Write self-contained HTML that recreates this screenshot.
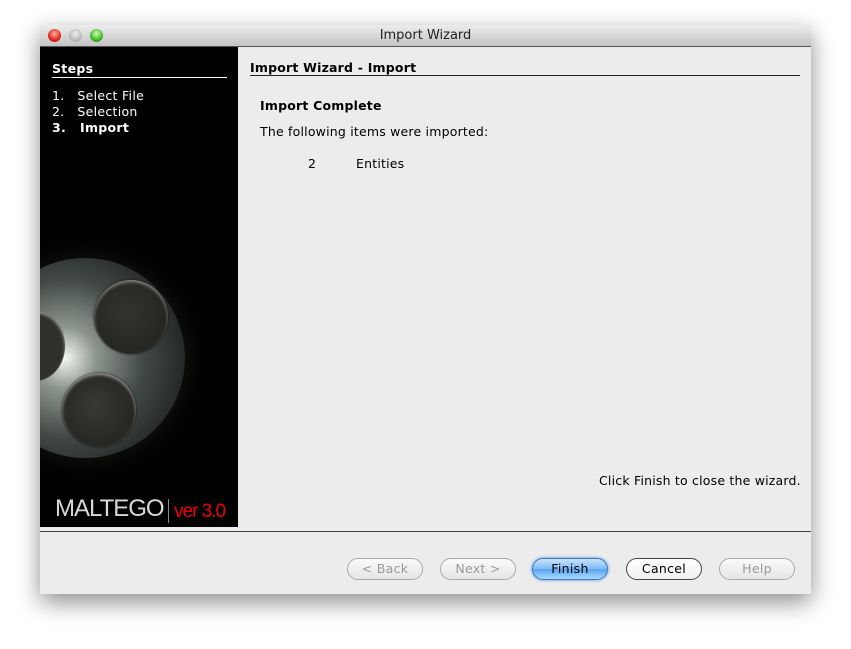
<!DOCTYPE html>
<html><head><style>
body{margin:0;width:851px;height:649px;background:#fff;position:relative;overflow:hidden;font-family:"Lucida Grande","DejaVu Sans","Liberation Sans",sans-serif;}
.win{position:absolute;left:40px;top:25px;width:771px;height:569px;background:#ececec;box-shadow:0 8px 22px rgba(0,0,0,.45);}
.title{position:absolute;left:0;top:0;width:771px;height:21px;background:linear-gradient(#ececec,#c4c4c4);border-bottom:1px solid #555;text-align:center;font-size:13px;line-height:22px;color:#222;}
.dot{position:absolute;top:4px;width:13px;height:13px;border-radius:50%;}
.left{position:absolute;left:0;top:22px;width:198px;height:480px;background:#000;overflow:hidden;color:#fff;font-size:12.5px;letter-spacing:0.3px;}
.t{position:absolute;font-size:12.5px;letter-spacing:0.2px;}
.btn{position:absolute;top:533px;height:20px;border-radius:11px;border:1px solid #aaa;background:linear-gradient(#fafafa,#e6e6e6);font-size:12.5px;text-align:center;line-height:20px;color:#999;letter-spacing:0.3px;}
</style></head><body>
<div class="win">
<div class="title">Import Wizard
<div class="dot" style="left:8px;background:radial-gradient(circle at 50% 35%,#ffb0a0,#e0261c 60%,#a01010)"></div>
<div class="dot" style="left:29px;background:radial-gradient(circle at 50% 35%,#eee,#bbb 60%,#999)"></div>
<div class="dot" style="left:50px;background:radial-gradient(circle at 50% 35%,#d0ffb0,#3eb82a 60%,#207010)"></div>
</div>
<div class="left">
<div style="position:absolute;left:12px;top:14px;font-weight:bold;">Steps</div>
<div style="position:absolute;left:12px;top:30px;width:175px;border-top:1px solid #fff"></div>
<div style="position:absolute;left:12px;top:41px;line-height:16px;">1.&nbsp;&nbsp;&nbsp;Select File<br>2.&nbsp;&nbsp;&nbsp;Selection<br><b>3.&nbsp;&nbsp;&nbsp;Import</b></div>
<div style="position:absolute;left:-55px;top:211px;width:200px;height:200px;border-radius:50%;background:radial-gradient(circle at 40% 50%,#f4f8ee 0%,#8c968e 20%,#424a46 50%,#181a1a 88%);box-shadow:0 0 30px rgba(120,120,100,.2)"></div>
<div style="position:absolute;left:54px;top:233px;width:74px;height:74px;border-radius:50%;background:radial-gradient(circle at 45% 45%,#34342f,#1e1e1b);box-shadow:inset 0 2px 3px #888,0 0 2px #111"></div>
<div style="position:absolute;left:22px;top:326px;width:74px;height:74px;border-radius:50%;background:radial-gradient(circle at 45% 45%,#383834,#1e1e1c);box-shadow:inset 0 2px 3px #999,0 0 2px #111"></div>
<div style="position:absolute;left:-35px;top:264px;width:60px;height:70px;border-radius:50%;background:#2f302c;box-shadow:inset 0 2px 3px #999"></div>
<div style="position:absolute;left:15px;top:448px;font-family:'Liberation Sans',sans-serif;font-size:24px;color:#d8d8d8;letter-spacing:-1px;">MALTEGO</div>
<div style="position:absolute;left:128px;top:452px;height:24px;border-left:1px solid #888"></div>
<div style="position:absolute;left:134px;top:454px;font-family:'Liberation Sans',sans-serif;font-size:19px;color:#e00;letter-spacing:-1px;">ver 3.0</div>
</div>
<div class="t" style="left:210px;top:35px;font-weight:bold;">Import Wizard - Import</div>
<div style="position:absolute;left:210px;top:50px;width:550px;border-top:1px solid #222"></div>
<div class="t" style="left:220px;top:73px;font-weight:bold;">Import Complete</div>
<div class="t" style="left:220px;top:99px;">The following items were imported:</div>
<div class="t" style="left:268px;top:131px;">2</div>
<div class="t" style="left:316px;top:131px;">Entities</div>
<div class="t" style="left:559px;top:448px;">Click Finish to close the wizard.</div>
<div style="position:absolute;left:0;top:506px;width:771px;border-top:1px solid #444"></div>
<div class="btn" style="left:307px;width:74px;">&lt; Back</div>
<div class="btn" style="left:400px;width:74px;">Next &gt;</div>
<div class="btn" style="left:492px;width:74px;color:#000;border-color:#3a78c8;background:linear-gradient(#c8e4ff,#7cbaf6 50%,#5aa4ee 52%,#a8dcff);box-shadow:0 0 3px #4a8ad8">Finish</div>
<div class="btn" style="left:586px;width:74px;color:#000;border-color:#444;background:linear-gradient(#fff,#f0f0f0)">Cancel</div>
<div class="btn" style="left:679px;width:74px;">Help</div>
</div>
</body></html>
